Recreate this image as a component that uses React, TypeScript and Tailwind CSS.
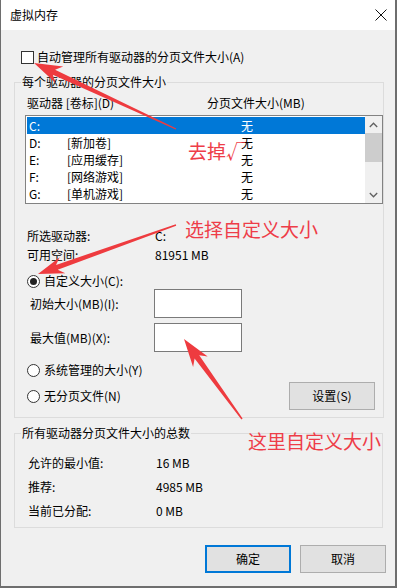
import React from "react";

type Pt = [number, number];

// tapered annotation arrow: thin at the tail, wider towards the head
function arrowPoints(tail: Pt, tip: Pt, headLen = 24, headW = 9, neck = 2.6, tailW = 0.7) {
  const dx = tip[0] - tail[0];
  const dy = tip[1] - tail[1];
  const len = Math.hypot(dx, dy);
  const ux = dx / len;
  const uy = dy / len;
  const nx = -uy;
  const ny = ux;
  const bx = tip[0] - ux * headLen;
  const by = tip[1] - uy * headLen;
  const p = (x: number, y: number) => `${x.toFixed(1)},${y.toFixed(1)}`;
  const nkx = bx + ux * 4;
  const nky = by + uy * 4;
  return [
    p(tail[0] + nx * tailW, tail[1] + ny * tailW),
    p(nkx + nx * neck, nky + ny * neck),
    p(bx - ux * 2 + nx * headW, by - uy * 2 + ny * headW),
    p(tip[0], tip[1]),
    p(bx - ux * 2 - nx * headW, by - uy * 2 - ny * headW),
    p(nkx - nx * neck, nky - ny * neck),
    p(tail[0] - nx * tailW, tail[1] - ny * tailW),
  ].join(" ");
}

const drives = [
  { letter: "C:", label: "", size: "无" },
  { letter: "D:", label: "[新加卷]", size: "无" },
  { letter: "E:", label: "[应用缓存]", size: "无" },
  { letter: "F:", label: "[网络游戏]", size: "无" },
  { letter: "G:", label: "[单机游戏]", size: "无" },
];

const Radio: React.FC<{ checked?: boolean }> = ({ checked }) => (
  <span className="w-[13px] h-[13px] rounded-full border border-[#333333] bg-white flex items-center justify-center shrink-0">
    {checked && <span className="w-[7px] h-[7px] rounded-full bg-[#222222]" />}
  </span>
);

export default function App() {
  return (
    <div className="relative w-[397px] h-[588px] bg-[#f0f0f0] border-l border-r-2 border-b-2 border-[#6e6e6e] text-[12px] text-black font-['Noto_Sans_CJK_SC','Noto_Sans',sans-serif] overflow-hidden">
      {/* Title bar */}
      <div className="h-[30px] bg-white flex items-center justify-between pl-[9px] pr-[8px]">
        <span className="leading-[16px]">虚拟内存</span>
        <svg width="12" height="12" viewBox="0 0 12 12">
          <path d="M0.5 0.5 L11.5 11.5 M11.5 0.5 L0.5 11.5" stroke="#111" strokeWidth="1" />
        </svg>
      </div>

      <div className="pl-[13px]">
        {/* Auto manage checkbox */}
        <div className="mt-[19px] h-[16px] flex items-center pl-[7px]">
          <span className="w-[13px] h-[13px] border border-[#333333] bg-white shrink-0" />
          <span className="ml-[3px] leading-[16px]">自动管理所有驱动器的分页文件大小(A)</span>
        </div>

        {/* Per drive group */}
        <fieldset className="mt-[9px] w-[369px] border border-[#dcdcdc] pl-[6px] pr-0 pb-[7px] m-0">
          <legend className="px-[1px] leading-[16px]">每个驱动器的分页文件大小</legend>
          <div className="mt-[5px] h-[16px] flex items-center pl-[6px] leading-[16px]">
            <span className="w-[180px]">驱动器 [卷标](D)</span>
            <span>分页文件大小(MB)</span>
          </div>

          <div className="mt-[4px] ml-[4px] w-[358px] h-[89px] border border-[#828282] bg-white flex">
            <div className="flex-1 pt-[1px] pl-[1px]">
              {drives.map((d, i) => (
                <div
                  key={d.letter}
                  className={`h-[17px] w-[338px] flex items-center pl-[2px] leading-[17px] ${
                    i === 0 ? "bg-[#0078d7] text-white" : ""
                  }`}
                >
                  <span className="w-[38px]">{d.letter}</span>
                  <span className="w-[174px]">{d.label}</span>
                  <span>{d.size}</span>
                </div>
              ))}
            </div>
            <div className="w-[17px] bg-[#f0f0f0] flex flex-col">
              <div className="h-[17px] flex items-center justify-center">
                <svg width="9" height="6" viewBox="0 0 9 6">
                  <path d="M0.8 5 L4.5 1.2 L8.2 5" fill="none" stroke="#606060" strokeWidth="1.3" />
                </svg>
              </div>
              <div className="h-[29px] bg-[#cdcdcd]" />
              <div className="flex-1" />
              <div className="h-[17px] flex items-center justify-center">
                <svg width="9" height="6" viewBox="0 0 9 6">
                  <path d="M0.8 1 L4.5 4.8 L8.2 1" fill="none" stroke="#606060" strokeWidth="1.3" />
                </svg>
              </div>
            </div>
          </div>

          <div className="mt-[22px] pl-[6px]">
            <div className="h-[19px] flex items-center">
              <span className="w-[128px]">所选驱动器:</span>
              <span>C:</span>
            </div>
            <div className="h-[19px] flex items-center">
              <span className="w-[128px]">可用空间:</span>
              <span>81951 MB</span>
            </div>
          </div>

          <div className="mt-[9px] h-[16px] flex items-center pl-[6px]">
            <Radio checked />
            <span className="ml-[4px]">自定义大小(C):</span>
          </div>

          <div className="pl-[9px]">
            <div className="h-[29px] flex items-center">
              <span className="w-[124px]">初始大小(MB)(I):</span>
              <div className="w-[88px] h-[29px] border border-[#7a7a7a] bg-white" />
            </div>
            <div className="mt-[5px] h-[29px] flex items-center">
              <span className="w-[124px]">最大值(MB)(X):</span>
              <div className="w-[88px] h-[29px] border border-[#7a7a7a] bg-white" />
            </div>
          </div>

          <div className="mt-[10px] h-[16px] flex items-center pl-[6px]">
            <Radio />
            <span className="ml-[4px]">系统管理的大小(Y)</span>
          </div>

          <div className="mt-[4px] h-[28px] flex items-center justify-between pl-[6px] pr-[8px]">
            <div className="flex items-center">
              <Radio />
              <span className="ml-[4px]">无分页文件(N)</span>
            </div>
            <button className="w-[86px] h-[28px] bg-[#e1e1e1] border border-[#adadad]">设置(S)</button>
          </div>
        </fieldset>

        {/* Totals group */}
        <fieldset className="mt-[7px] w-[369px] border border-[#dcdcdc] pl-[6px] pr-0 pb-[4px] m-0">
          <legend className="px-[1px] leading-[16px]">所有驱动器分页文件大小的总数</legend>
          <div className="mt-[10px] pl-[7px]">
            <div className="h-[24px] flex items-center">
              <span className="w-[128px]">允许的最小值:</span>
              <span>16 MB</span>
            </div>
            <div className="h-[24px] flex items-center">
              <span className="w-[128px]">推荐:</span>
              <span>4985 MB</span>
            </div>
            <div className="h-[24px] flex items-center">
              <span className="w-[128px]">当前已分配:</span>
              <span>0 MB</span>
            </div>
          </div>
        </fieldset>
      </div>

      {/* Dialog buttons */}
      <div className="mt-[17px] flex justify-end gap-[9px] pr-[9px]">
        <button className="w-[86px] h-[28px] bg-[#e1e1e1] border-2 border-[#0078d7]">确定</button>
        <button className="w-[86px] h-[28px] bg-[#e1e1e1] border border-[#adadad]">取消</button>
      </div>

      {/* Red annotations */}
      <svg className="absolute left-[-1px] top-0 pointer-events-none" width="397" height="588">
        <polygon points={arrowPoints([176, 129], [34, 63], 26, 9, 2.8)} fill="#ee3b3f" />
        <polygon points={arrowPoints([176, 225], [38, 274], 24, 8.5, 2.6)} fill="#ee3b3f" />
        <polygon points={arrowPoints([242, 419], [184, 339], 26, 9, 2.8)} fill="#ee3b3f" />
      </svg>
      <span className="absolute left-[187px] top-[141px] text-[19px] leading-[19px] text-[#ee3d48]">去掉√</span>
      <span className="absolute left-[184px] top-[219px] text-[19px] leading-[19px] text-[#ee3d48]">选择自定义大小</span>
      <span className="absolute left-[247px] top-[431px] text-[19px] leading-[19px] text-[#ee3d48]">这里自定义大小</span>
    </div>
  );
}
